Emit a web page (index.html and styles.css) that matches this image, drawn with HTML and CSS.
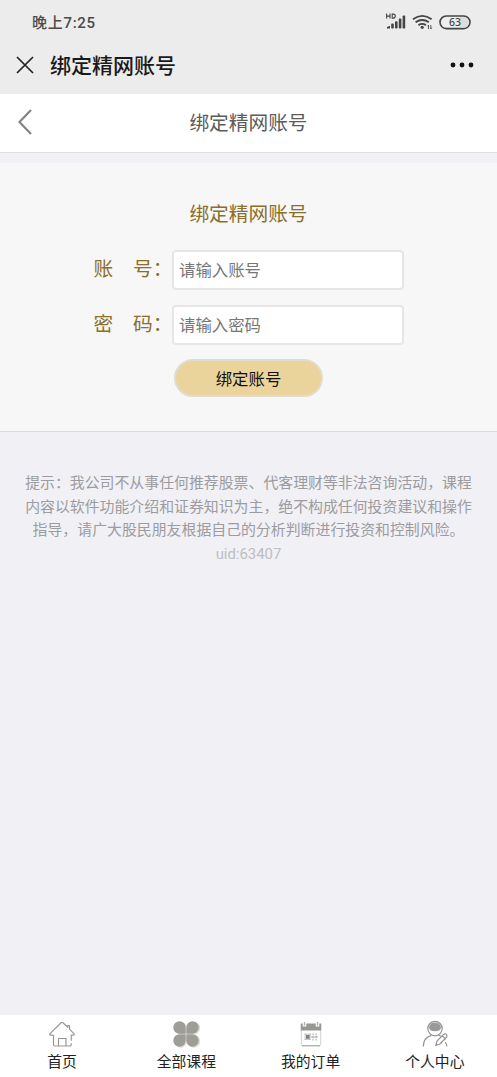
FILE: index.html
```html
<!DOCTYPE html>
<html lang="zh-CN">
<head>
<meta charset="utf-8">
<title>绑定精网账号</title>
<link rel="stylesheet" href="styles.css">
</head>
<body>
<div class="screen">
  <div class="status">
    <span class="time">晚上7:25</span>
    <svg class="status-icons" width="90" height="20" viewBox="0 0 90 20">
      <g fill="none" stroke="#444" stroke-width="1.1">
        <path d="M3.600 2.600v5M7 2.600v5M3.600 5.100H7M9.200 3.100v4h1.100q2 0 2-2t-2-2z"/>
      </g>
      <g fill="#444">
        <path d="M4 17.600v-1.600l3-1.200v2.800z"/>
        <rect x="8.200" y="12.600" width="2.600" height="5" rx=".8"/>
        <rect x="12" y="10.200" width="2.600" height="7.400" rx=".8"/>
        <rect x="15.800" y="7.600" width="2.600" height="10" rx=".8"/>
        <rect x="19.600" y="4.600" width="2.600" height="13" rx=".8"/>
        <circle cx="39.200" cy="16.300" r="1.600"/>
      </g>
      <g fill="none" stroke="#444" stroke-width="1.900">
        <path d="M30 8.300q9.300-6.800 18.600 0M32.600 11.300q6.600-4.600 13.200 0M35.500 14.100q3.700-2.400 7.400 0"/>
        <path d="M45.500 18v-4l-1 1.300M47.800 14v4l1-1.300" stroke-width=".9"/>
      </g>
      <rect x="57" y="5" width="30" height="12.600" rx="6.300" fill="#eee" stroke="#444" stroke-width="1.600"/>
      <path d="M77 6h3.700a5.300 5.300 0 0 1 0 10.600H77z" fill="#ddd"/>
      <text class="battery" x="72" y="15.200" text-anchor="middle">63</text>
    </svg>
  </div>
  <div class="appbar">
    <svg class="close" width="18" height="18" viewBox="0 0 18 18"><path d="M1 1l16 16M17 1L1 17"/></svg>
    <span class="app-title">绑定精网账号</span>
    <svg class="more" width="24" height="6" viewBox="0 0 24 6"><circle cx="3" cy="3" r="2.400"/><circle cx="12" cy="3" r="2.400"/><circle cx="21" cy="3" r="2.400"/></svg>
  </div>
  <header class="header">
    <svg class="back" width="16" height="28" viewBox="0 0 16 28"><path d="M14 2L2.500 14L14 26"/></svg>
    <h1 class="page-title">绑定精网账号</h1>
  </header>
  <form class="panel">
    <h2 class="form-title">绑定精网账号</h2>
    <div class="row">
      <label class="label" for="account"><span>账</span><span>号：</span></label>
      <input class="input" id="account" type="text" placeholder="请输入账号">
    </div>
    <div class="row">
      <label class="label" for="password"><span>密</span><span>码：</span></label>
      <input class="input" id="password" type="password" placeholder="请输入密码">
    </div>
    <button class="submit" type="button">绑定账号</button>
  </form>
  <div class="notice">
    <div>提示：我公司不从事任何推荐股票、代客理财等非法咨询活动，课程</div>
    <div>内容以软件功能介绍和证券知识为主，绝不构成任何投资建议和操作</div>
    <div>指导，请广大股民朋友根据自己的分析判断进行投资和控制风险。</div>
    <div class="uid">uid:63407</div>
  </div>
  <nav class="tabs">
    <a class="tab">
      <svg class="icon" width="28" height="28" viewBox="0 0 28 28" fill="none" stroke="#979797" stroke-width="1.200" stroke-linejoin="round">
        <path d="M5.500 15.200H2.500q-1.400-.5-.4-1.600L13 2.800q1-.9 2 0l4.700 4.500V5.500h1.800v3.600l4.400 4.500q1 1.100-.4 1.600h-2.300v5.600"/>
        <path d="M5.500 15.200v9.300q0 1.500 1.500 1.500h14.500q1.700 0 1.700-1.600v-1.200"/>
        <path d="M10.500 26v-7.500h7.500V26"/>
      </svg>
      <span>首页</span>
    </a>
    <a class="tab">
      <svg class="icon" width="28" height="28" viewBox="0 0 28 28">
        <path class="petal-shadow" transform="translate(1.200 .7)" d="M13.500 13.500H8A6.300 6.300 0 1 1 13.500 7zM14.500 13.500V7A6.300 6.300 0 1 1 20 13.500zM13.500 14.500V21A6.300 6.300 0 1 1 8 14.500zM14.500 14.500H20A6.300 6.300 0 1 1 14.500 21z"/>
        <path class="petal" d="M13.700 13.700H7.500A6.200 6.200 0 1 1 13.700 7.500zM14.300 13.700V7.500A6.200 6.200 0 1 1 20.500 13.700zM13.700 14.300V20.500A6.200 6.200 0 1 1 7.500 14.300zM14.300 14.300H20.500A6.200 6.200 0 1 1 14.300 20.500z"/>
      </svg>
      <span>全部课程</span>
    </a>
    <a class="tab">
      <svg class="icon" width="28" height="28" viewBox="0 0 28 28">
        <path d="M4.300 10v14.500q0 1 1 1h17.400q1 0 1-1V10" fill="#fff" stroke="#d2d2d2" stroke-width="1"/>
        <path d="M5 25.800h18" stroke="#aaa" stroke-width="1.200"/>
        <path d="M3.700 3.500h2v3h3.600v-3h9.400v3h3.600v-3h2V10.500H3.700z" fill="#979792"/>
        <path d="M7.500 2v3.500M20.500 2v3.500" stroke="#b0b0ac" stroke-width="1.400"/>
        <path d="M8.200 13.500v6.500M13 13.500v6.500M7.500 14.200H14M7.500 19.400H14" stroke="#bbb" stroke-width=".9" fill="none"/>
        <rect x="9" y="15" width="3.600" height="3.800" fill="#808080"/>
        <path d="M16 13.500v7M19.200 13.500v7" stroke="#aaa" stroke-width="1.100" stroke-dasharray="1.800 .8"/>
        <path d="M14 17h7" stroke="#aaa" stroke-width=".9"/>
      </svg>
      <span>我的订单</span>
    </a>
    <a class="tab">
      <svg class="icon" width="28" height="28" viewBox="0 0 28 28" fill="none" stroke="#929292" stroke-width="1.200" stroke-linecap="round" stroke-linejoin="round">
        <circle cx="14" cy="8.600" r="7.200"/>
        <path d="M8.600 7.600a5.500 5.500 0 0 1 10.800 0q-.6 3.100-5.400 3.100t-5.400-3.100z" fill="#999" stroke="#999"/>
        <path d="M2.300 26q.5-8.500 7.700-10.400M18 15.200l1.500.8"/>
        <path d="M14.800 25.500l1.200-4.400 6.600-6.700q2.200-1.300 3.200.8.500 1.200-.4 2.200l-6.500 6.600zM21.200 15.800l3.200 3.100M24.500 22.500q1.100 1.500 1.300 3.500"/>
      </svg>
      <span>个人中心</span>
    </a>
  </nav>
</div>
</body>
</html>
```
FILE: styles.css
```css
* { box-sizing: border-box; }
body {
  margin: 0;
  font-family: Roboto, "Noto Sans CJK SC", sans-serif;
}
.screen {
  display: flex;
  flex-direction: column;
  height: 1077px;
  background: #f0f0f5;
}
.status {
  display: flex;
  align-items: center;
  justify-content: space-between;
  height: 40px;
  padding: 2px 24px 0 32px;
  background: #ececec;
}
.time {
  font-size: 15px;
  font-weight: 500;
  letter-spacing: .7px;
  color: #4a4a4a;
}
.battery {
  font: 500 10.500px "Noto Sans", sans-serif;
  fill: #444;
}
.appbar {
  display: flex;
  align-items: center;
  height: 54px;
  padding: 0 23px 4px 16px;
  background: #ececec;
}
.close {
  fill: none;
  stroke: #222;
  stroke-width: 1.700;
}
.app-title {
  flex: 1;
  margin-left: 16px;
  padding-bottom: 2px;
  font-size: 21px;
  font-weight: 500;
  color: #1a1a1a;
}
.more { fill: #111; }
.header {
  display: grid;
  grid-template-columns: 40px 1fr 40px;
  align-items: center;
  height: 59px;
  padding: 0 0 3px;
  background: #fff;
  border-bottom: 1px solid #dedee0;
}
.back {
  margin-left: 17px;
  fill: none;
  stroke: #858585;
  stroke-width: 2.200;
}
.page-title, .form-title {
  margin: 0;
  text-align: center;
  font-size: 19.700px;
  font-weight: 400;
  line-height: 30px;
}
.page-title { padding-top: 4px; color: #5c5c5c; }
.panel {
  display: flex;
  flex-direction: column;
  height: 269px;
  margin-top: 10px;
  padding-top: 37px;
  background: #f7f7f7;
  border-bottom: 1px solid #dcdcdf;
}
.form-title {
  margin-bottom: 20px;
  color: #8b6f2b;
}
.row {
  display: flex;
  width: 310px;
  height: 40px;
  margin: 0 0 15px 94px;
}
.label {
  display: flex;
  justify-content: space-between;
  width: 78px;
  font-size: 19.700px;
  line-height: 39px;
  color: #8b6f2b;
}
.label span:first-child { margin-left: -.5px; }
.label span:last-child { width: 39px; white-space: nowrap; }
.input {
  width: 232px;
  padding: 1px 5px 0;
  border: 2px solid #e6e6e6;
  border-radius: 4px;
  outline: 0;
  background: #fff;
  font: 16.400px Roboto, "Noto Sans CJK SC", sans-serif;
}
.input::placeholder { color: #777; }
.submit {
  width: 149px;
  height: 38px;
  margin-left: 174px;
  margin-top: -1px;
  padding: 0;
  border: 2px solid #e1dccf;
  border-radius: 19px;
  background: #ebd49b;
  color: #111;
  font: 16.400px Roboto, "Noto Sans CJK SC", sans-serif;
}
.notice {
  padding-top: 40px;
  text-align: center;
  white-space: nowrap;
  font-size: 14.900px;
  line-height: 23.500px;
  color: #9c9ca0;
}
.uid { color: #bebec2; }
.tabs {
  display: grid;
  grid-template-columns: repeat(4, 1fr);
  height: 62px;
  margin-top: auto;
  background: #fff;
}
.tab {
  display: flex;
  flex-direction: column;
  align-items: center;
  padding-top: 5px;
  font-size: 14.800px;
  line-height: 28px;
  color: #222;
}
.petal { fill: #9e9e97; }
.petal-shadow { fill: #dfdfd9; }
```
